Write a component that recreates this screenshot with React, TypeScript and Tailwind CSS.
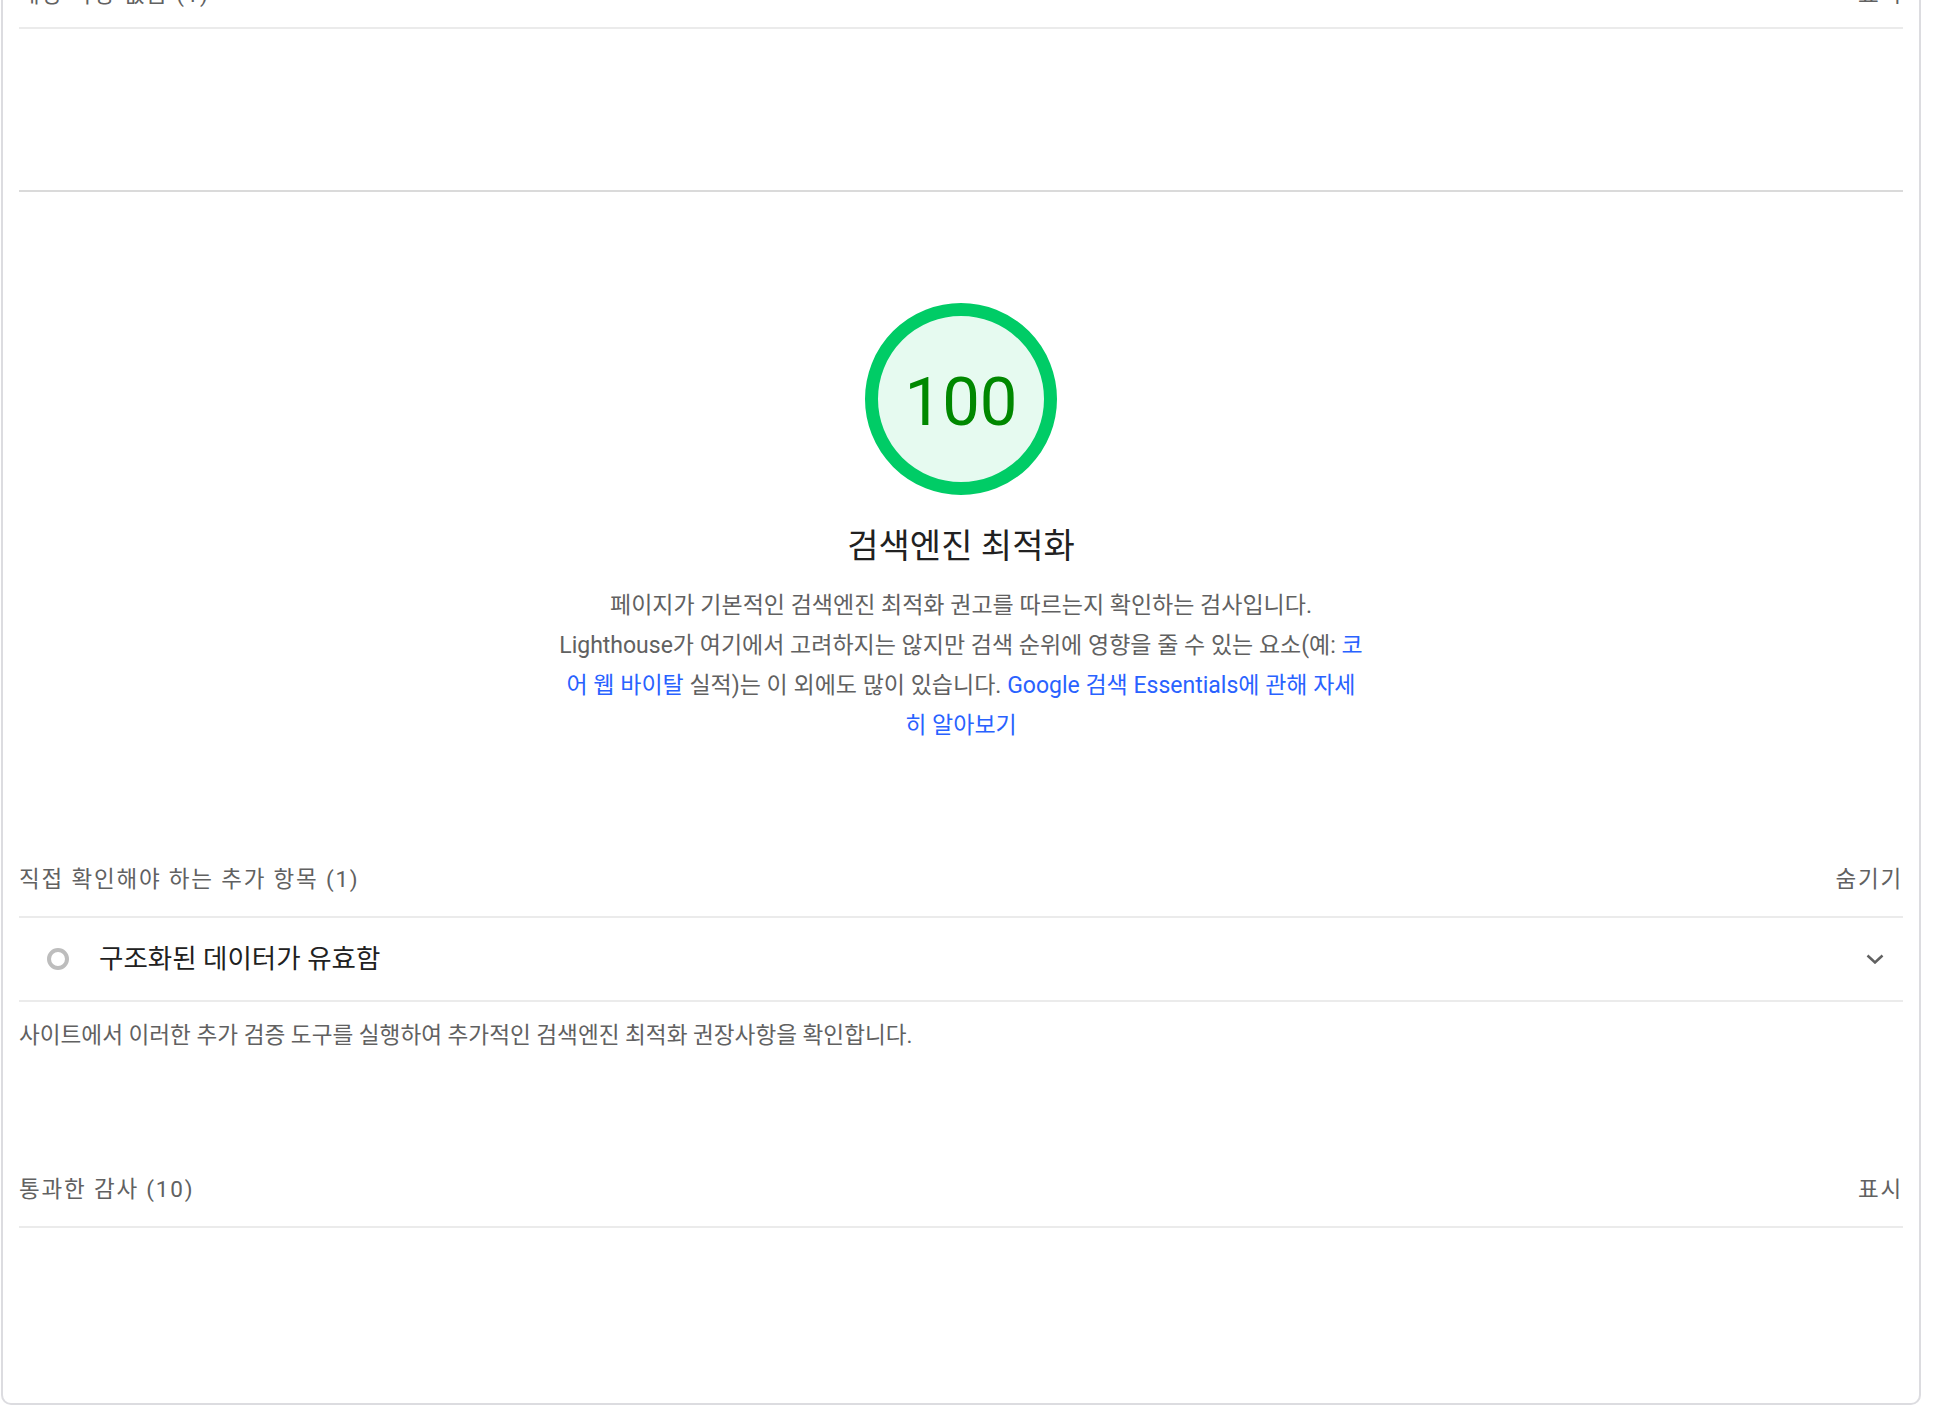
import React from "react";

// Lighthouse-style category block: SEO score gauge, manual checks and passed audits.

function GroupHeader({
  title,
  toggle,
  height = "h-[72px]",
}: {
  title: string;
  toggle: string;
  height?: string;
}) {
  return (
    <>
      <div
        className={`flex ${height} items-center justify-between text-[22.5px] tracking-[1.8px] text-[#616161]`}
      >
        <span>{title}</span>
        <span>{toggle}</span>
      </div>
      <div className="h-[2px] bg-[#ebebeb]" />
    </>
  );
}

function Gauge({ score }: { score: number }) {
  return (
    <div className="flex h-[192px] w-[192px] items-center justify-center rounded-full border-[13px] border-[#00cc66] bg-[#e6faf0]">
      <span className="pt-[6px] text-[67px] leading-none tabular-nums text-[#008800]">{score}</span>
    </div>
  );
}

function Chevron() {
  return (
    <svg width="18" height="10" viewBox="0 0 18 10" fill="none">
      <path d="M1.5 1.5 9 8.5l7.5-7" stroke="#616161" strokeWidth="2.5" />
    </svg>
  );
}

const link = "text-[#2962ff]";

export default function App() {
  return (
    <div className="h-[1418px] overflow-hidden bg-white pl-px font-['Roboto','Noto_Sans_CJK_KR',sans-serif]">
      <div className="-mt-[37px] w-[1920px] rounded-b-[10px] border-2 border-t-0 border-[#dcdce0] px-4 pb-[175px]">
        <GroupHeader title="해당 사항 없음 (1)" toggle="표시" height="h-[64px]" />
        <div className="h-[161px]" />
        <div className="h-[2px] bg-[#dadada]" />

        <section className="flex flex-col items-center pt-[111px]">
          <Gauge score={100} />
          <h2 className="mt-[31px] text-[34px] leading-[40px] text-[#212121]">검색엔진 최적화</h2>
          <div className="mt-[20px] text-center text-[23px] leading-[40px] text-[#616161]">
            <div className="whitespace-nowrap">
              페이지가 기본적인 검색엔진 최적화 권고를 따르는지 확인하는 검사입니다.
            </div>
            <div className="whitespace-nowrap">
              Lighthouse가 여기에서 고려하지는 않지만 검색 순위에 영향을 줄 수 있는 요소(예:{" "}
              <a className={link}>코</a>
            </div>
            <div className="whitespace-nowrap">
              <a className={link}>어 웹 바이탈</a> 실적)는 이 외에도 많이 있습니다.{" "}
              <a className={link}>Google 검색 Essentials에 관해 자세</a>
            </div>
            <div className="whitespace-nowrap">
              <a className={link}>히 알아보기</a>
            </div>
          </div>
        </section>

        <div className="mt-[98px]">
          <GroupHeader title="직접 확인해야 하는 추가 항목 (1)" toggle="숨기기" />
        </div>
        <div className="flex h-[82px] items-center">
          <div className="ml-[28px] h-[22px] w-[22px] rounded-full border-4 border-[#bdbdbd]" />
          <div className="ml-[30px] text-[26.5px] text-[#212121]">구조화된 데이터가 유효함</div>
          <div className="ml-auto mr-[19px] flex">
            <Chevron />
          </div>
        </div>
        <div className="h-[2px] bg-[#ebebeb]" />
        <p className="mt-[19px] text-[22.6px] leading-[30px] text-[#616161]">
          사이트에서 이러한 추가 검증 도구를 실행하여 추가적인 검색엔진 최적화 권장사항을 확인합니다.
        </p>

        <div className="mt-[103px]">
          <GroupHeader title="통과한 감사 (10)" toggle="표시" />
        </div>
      </div>
    </div>
  );
}
